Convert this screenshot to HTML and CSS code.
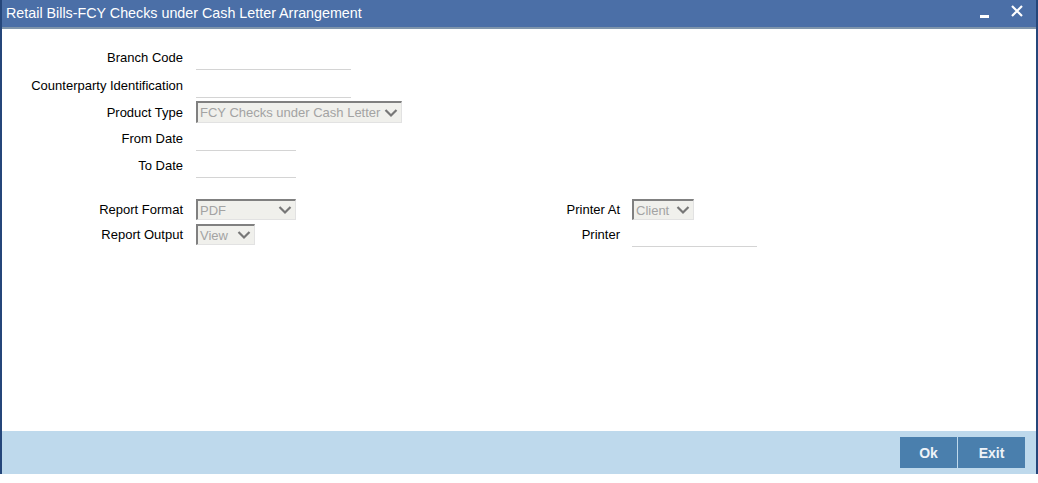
FILE: index.html
```
<!DOCTYPE html>
<html lang="en">
<head>
  <meta charset="UTF-8" />
  <title>Retail Bills-FCY Checks under Cash Letter Arrangement</title>
  <link rel="stylesheet" href="styles.css">
</head>
<body>
  <div class="window">
    <header class="titlebar">
      <span class="title">Retail Bills-FCY Checks under Cash Letter Arrangement</span>
      <div class="win-controls">
        <span class="min-btn"></span>
        <svg class="close-btn" width="12" height="12" viewBox="0 0 12 12">
          <path d="M1 1 L11 11 M11 1 L1 11" stroke="#fff" stroke-width="2.2" fill="none" />
        </svg>
      </div>
    </header>

    <div class="content">
      <div class="form-top">
        <div class="row r1">
          <label>Branch Code</label>
          <input type="text" class="field w154" />
        </div>
        <div class="row r2">
          <label>Counterparty Identification</label>
          <input type="text" class="field w154" />
        </div>
        <div class="row r3">
          <label>Product Type</label>
          <div class="select w206">
            <span>FCY Checks under Cash Letter</span>
            <svg width="14" height="10" viewBox="0 0 14 10"><path d="M1.5 2 L7 7.5 L12.5 2" stroke="#777" stroke-width="2.2" fill="none" /></svg>
          </div>
        </div>
        <div class="row r4">
          <label>From Date</label>
          <input type="text" class="field w100" />
        </div>
        <div class="row r5">
          <label>To Date</label>
          <input type="text" class="field w100" />
        </div>
      </div>

      <div class="form-bottom">
        <div class="col-left">
          <div class="row r6">
            <label>Report Format</label>
            <div class="select w100">
              <span>PDF</span>
              <svg width="14" height="10" viewBox="0 0 14 10"><path d="M1.5 2 L7 7.5 L12.5 2" stroke="#777" stroke-width="2.2" fill="none" /></svg>
            </div>
          </div>
          <div class="row r7">
            <label>Report Output</label>
            <div class="select w59">
              <span>View</span>
              <svg width="14" height="10" viewBox="0 0 14 10"><path d="M1.5 2 L7 7.5 L12.5 2" stroke="#777" stroke-width="2.2" fill="none" /></svg>
            </div>
          </div>
        </div>
        <div class="col-right">
          <div class="row r6">
            <label>Printer At</label>
            <div class="select w62">
              <span>Client</span>
              <svg width="14" height="10" viewBox="0 0 14 10"><path d="M1.5 2 L7 7.5 L12.5 2" stroke="#777" stroke-width="2.2" fill="none" /></svg>
            </div>
          </div>
          <div class="row r7">
            <label>Printer</label>
            <input type="text" class="field w125 low" />
          </div>
        </div>
      </div>
    </div>

    <footer class="footer">
      <button class="btn ok-btn">Ok</button>
      <button class="btn exit-btn">Exit</button>
    </footer>
  </div>
</body>
</html>
```

FILE: styles.css
```
* {
  box-sizing: border-box;
}

body {
  margin: 0;
  background: #fff;
  font-family: Arial, "Liberation Sans", sans-serif;
  font-size: 13px;
  color: #000;
}

.window {
  width: 1038px;
  height: 474px;
  display: flex;
  flex-direction: column;
  border-left: 2px solid #25467a;
  border-right: 2px solid #25467a;
}

.titlebar {
  height: 29px;
  background-color: #4b6fa7;
  border-bottom: 2px solid #7f95ab;
  display: flex;
  justify-content: space-between;
  align-items: center;
  padding: 0 13px 2px 4px;
  color: #fff;
}

.title {
  font-size: 14.3px;
}

.win-controls {
  display: flex;
  align-items: center;
  gap: 22px;
}

.min-btn {
  display: block;
  width: 9px;
  height: 3px;
  background: #fff;
  margin-top: 7px;
}

.close-btn {
  margin-bottom: 3px;
}

.content {
  flex: 1;
  background: #fff;
}

.form-top {
  padding-top: 14px;
}

.row {
  display: flex;
  align-items: center;
}

.row label {
  width: 181px;
  text-align: right;
  margin-right: 13px;
  white-space: nowrap;
}

.r1, .r2, .r5 {
  height: 28px;
}

.r3, .r4 {
  height: 26px;
}

.r6, .r7 {
  height: 25px;
}

.field {
  height: 24px;
  border: none;
  border-bottom: 1px solid #d4d4d4;
  background: transparent;
  margin-top: 1px;
  font: inherit;
}

.field.low {
  margin-top: 1px;
}

.w154 { width: 155px; }
.w100 { width: 100px; }
.w125 { width: 125px; }
.w206 { width: 206px; }
.w59 { width: 59px; }
.w62 { width: 62px; }

.select {
  height: 22px;
  background: #f0f0ec;
  border-top: 2px solid #808080;
  border-left: 2px solid #808080;
  border-right: 1px solid #e2e2e2;
  border-bottom: 1px solid #e2e2e2;
  display: flex;
  align-items: center;
  justify-content: space-between;
  padding: 0 3px 0 2px;
  color: #a3a3a3;
  white-space: nowrap;
  overflow: hidden;
}

.r6 .select, .r7 .select {
  height: 21px;
}

.form-bottom {
  display: flex;
  padding-top: 18px;
}

.col-left {
  width: 494px;
}

.col-right .row label {
  width: 124px;
  margin-right: 12px;
}

.footer {
  height: 43px;
  background-color: #bed9ec;
  display: flex;
  justify-content: flex-end;
  align-items: flex-start;
  padding: 6px 11px 0 0;
  gap: 1px;
}

.btn {
  height: 31px;
  border: none;
  background-color: #4a7fad;
  color: #eef3f8;
  font-family: Arial, "Liberation Sans", sans-serif;
  font-size: 14px;
  font-weight: bold;
  cursor: pointer;
}

.ok-btn {
  width: 57px;
}

.exit-btn {
  width: 67px;
}
```
